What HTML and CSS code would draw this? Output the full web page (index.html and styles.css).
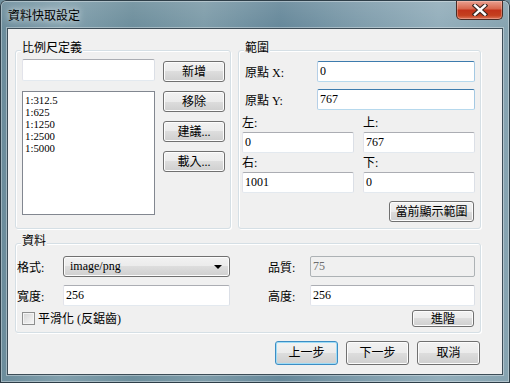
FILE: index.html
```html
<!DOCTYPE html>
<html lang="zh-Hant">
<head>
    <meta charset="UTF-8">
    <title>資料快取設定</title>
    <link rel="stylesheet" href="styles.css">
</head>
<body>
<div class="window">
    <div class="titlebar">
        <span class="title">資料快取設定</span>
        <span class="close">
            <svg width="16" height="12" viewBox="0 0 16 12">
                <path d="M3 1.5 L13 10.5 M13 1.5 L3 10.5" stroke="#3a2620" stroke-width="4.6" stroke-linecap="square"/>
                <path d="M3 1.5 L13 10.5 M13 1.5 L3 10.5" stroke="#fff" stroke-width="2.4" stroke-linecap="square"/>
            </svg>
        </span>
    </div>
    <div class="client">
        <div class="top-row">
            <!--比例尺-->
            <div class="group scale">
                <span class="legend">比例尺定義</span>
                <div class="scale-left">
                    <div class="edit scale-edit"></div>
                    <div class="listbox">
                        <div>1:312.5</div>
                        <div>1:625</div>
                        <div>1:1250</div>
                        <div>1:2500</div>
                        <div>1:5000</div>
                    </div>
                </div>
                <div class="scale-buttons">
                    <div class="btn">新增</div>
                    <div class="btn">移除</div>
                    <div class="btn">建議...</div>
                    <div class="btn">載入...</div>
                </div>
            </div>
            <!--範圍-->
            <div class="group range">
                <span class="legend">範圍</span>
                <div class="origin-row">
                    <span class="origin-label">原點 X:</span>
                    <div class="edit focus origin-edit">0</div>
                </div>
                <div class="origin-row second">
                    <span class="origin-label">原點 Y:</span>
                    <div class="edit focus origin-edit">767</div>
                </div>
                <div class="bounds">
                    <span>左:</span>
                    <span>上:</span>
                    <div class="edit">0</div>
                    <div class="edit">767</div>
                    <span>右:</span>
                    <span>下:</span>
                    <div class="edit">1001</div>
                    <div class="edit">0</div>
                </div>
                <div class="range-actions">
                    <div class="btn wide">當前顯示範圍</div>
                </div>
            </div>
        </div>
        <!--資料-->
        <div class="group data">
            <span class="legend">資料</span>
            <div class="data-row">
                <span class="data-label">格式:</span>
                <div class="combo"><span>image/png</span><i class="arrow"></i></div>
                <span class="spacer"></span>
                <span class="data-label right">品質:</span>
                <div class="edit disabled field2">75</div>
            </div>
            <div class="data-row gap8">
                <span class="data-label">寬度:</span>
                <div class="edit field1">256</div>
                <span class="spacer"></span>
                <span class="data-label right">高度:</span>
                <div class="edit field2">256</div>
            </div>
            <div class="data-row last">
                <span class="check"></span>
                <span class="check-text">平滑化 (反鋸齒)</span>
                <div class="btn small">進階</div>
            </div>
        </div>
        <div class="actions">
            <div class="btn big default">上一步</div>
            <div class="btn big">下一步</div>
            <div class="btn big">取消</div>
        </div>
    </div>
</div>
</body>
</html>
```

FILE: styles.css
```css
* {
    margin: 0;
    padding: 0;
    box-sizing: border-box;
}
body {
    font: 12px "Liberation Serif", "Noto Sans CJK TC", serif;
    color: #000;
    background: #6f8f9d;
}
.window {
    width: 510px;
    height: 383px;
    display: flex;
    flex-direction: column;
    border-radius: 6px 6px 0 0;
    background:
        linear-gradient(180deg, rgba(255,255,255,.10), rgba(255,255,255,0) 28px),
        linear-gradient(90deg, #6b8c9b 0%, #82a0ad 12%, #6d8e9c 26%, #7e9ca9 40%, #66889a 55%, #7e9cab 70%, #93aebb 86%, #86a3b0 100%);
    box-shadow: inset 0 0 0 1px #2e3e48, inset 0 0 0 2px rgba(255,255,255,.35);
}
.titlebar {
    height: 28px;
    display: flex;
    align-items: flex-start;
    padding: 0 7px 0 8px;
}
.title {
    margin-top: 8px;
    line-height: 14px;
    font-family: "Noto Sans CJK TC", sans-serif;
    text-shadow: 0 0 6px rgba(255,255,255,.7), 0 0 10px rgba(255,255,255,.5);
}
.close {
    margin-left: auto;
    margin-top: 1px;
    width: 47px;
    height: 19px;
    display: flex;
    align-items: center;
    justify-content: center;
    border: 1px solid #4a2c26;
    border-top: none;
    border-radius: 0 0 5px 5px;
    background: linear-gradient(#e9a090, #d8684f 42%, #c2331a 52%, #c4401f 80%, #dc7358);
    box-shadow: inset 0 0 0 1px rgba(255,220,210,.35);
}
.client {
    flex: 1;
    margin: 0 7px 8px 7px;
    border: 1px solid #3d4d57;
    background: #f0f0f0;
    padding: 21px 21px 0 7px;
    display: flex;
    flex-direction: column;
    box-shadow: 0 0 0 1px rgba(255,255,255,.35);
}
.top-row {
    display: flex;
    gap: 7px;
    height: 179px;
}
.group {
    position: relative;
    border: 1px solid #d5dfe5;
    border-radius: 3px;
    box-shadow: inset 1px 1px 0 #fff, 1px 1px 0 #fff;
}
.legend {
    position: absolute;
    top: -11px;
    left: 5px;
    padding: 0 1px;
    line-height: 14px;
    background: #f0f0f0;
    font-family: "Noto Sans CJK TC", sans-serif;
}
.btn {
    display: flex;
    align-items: center;
    justify-content: center;
    height: 21px;
    border: 1px solid #707070;
    border-radius: 3px;
    background: linear-gradient(#f2f2f2, #ebebeb 50%, #dddddd 50%, #cfcfcf);
    box-shadow: inset 0 0 0 1px #fcfcfc;
    line-height: 14px;
}
.edit {
    height: 21px;
    border: 1px solid;
    border-color: #abadb3 #dbdfe6 #e3e9ef #e2e3ea;
    border-radius: 2px;
    background: #fff;
    padding: 0 2px;
    line-height: 18px;
}
.edit.focus {
    border-color: #3d7bad #a4c9e3 #b7d9ed #b5cfe7;
}
.edit.disabled {
    background: #f0f0f0;
    border-color: #adb2b5;
    color: #6d6d6d;
}

/* 比例尺 */
.scale {
    width: 216px;
    display: flex;
    gap: 8px;
    padding: 8px 5px 0 6px;
}
.scale-left {
    width: 133px;
    display: flex;
    flex-direction: column;
    gap: 10px;
}
.scale-edit {
    height: 22px;
}
.listbox {
    height: 124px;
    border: 1px solid #828790;
    background: #fff;
    padding: 2px 2px;
    font-size: 10.8px;
    line-height: 12px;
}
.scale-buttons {
    width: 62px;
    display: flex;
    flex-direction: column;
    gap: 9px;
    padding-top: 2px;
}

/* 範圍 */
.range {
    width: 243px;
    padding: 10px 5px 0 3px;
}
.origin-row {
    display: flex;
    align-items: center;
    padding-left: 3px;
}
.origin-row.second {
    margin-top: 7px;
}
.origin-label {
    width: 72px;
}
.origin-edit {
    width: 158px;
}
.bounds {
    display: grid;
    grid-template-columns: 112px 112px;
    grid-template-rows: 18px 21px 19px 21px;
    column-gap: 9px;
    margin-top: 4px;
}
.bounds span {
    align-self: center;
    line-height: 14px;
}
.range-actions {
    display: flex;
    justify-content: flex-end;
    margin-top: 8px;
    padding-right: 1px;
}
.btn.wide {
    width: 85px;
}

/* 資料 */
.data {
    margin-top: 14px;
    height: 90px;
    padding: 12px 5px 5px 1px;
    display: flex;
    flex-direction: column;
}
.data-row {
    display: flex;
    align-items: center;
    height: 21px;
}
.data-row.gap8 {
    margin-top: 8px;
}
.data-row.last {
    height: 17px;
    margin-top: 4px;
}
.data-label {
    width: 46px;
}
.data-label.right {
    width: 42px;
}
.spacer {
    width: 38px;
}
.combo {
    width: 167px;
    height: 21px;
    display: flex;
    align-items: center;
    padding-left: 6px;
    border: 1px solid #707070;
    border-radius: 3px;
    background: linear-gradient(#f2f2f2, #ebebeb 50%, #dddddd 50%, #cfcfcf);
    box-shadow: inset 0 0 0 1px #fcfcfc;
}
.arrow {
    margin-left: auto;
    margin-right: 7px;
    border-left: 4px solid transparent;
    border-right: 4px solid transparent;
    border-top: 4px solid #000;
}
.field1 {
    width: 167px;
}
.field2 {
    width: 165px;
}
.check {
    width: 13px;
    height: 13px;
    margin-left: 5px;
    border: 1px solid #8e8f8f;
    background: linear-gradient(135deg, #d4d4d4, #f8f8f8);
    box-shadow: inset 0 0 0 1px #f4f4f4;
}
.check-text {
    margin-left: 3px;
    line-height: 14px;
}
.btn.small {
    width: 62px;
    height: 17px;
    margin-left: auto;
    margin-right: 1px;
}

/* 按鈕 */
.actions {
    display: flex;
    justify-content: flex-end;
    gap: 8px;
    margin-top: 8px;
    padding-right: 1px;
}
.btn.big {
    width: 63px;
    height: 24px;
}
.btn.default {
    border-color: #3c8dc4;
    box-shadow: inset 0 0 0 1px #9fdcf6;
}
```
